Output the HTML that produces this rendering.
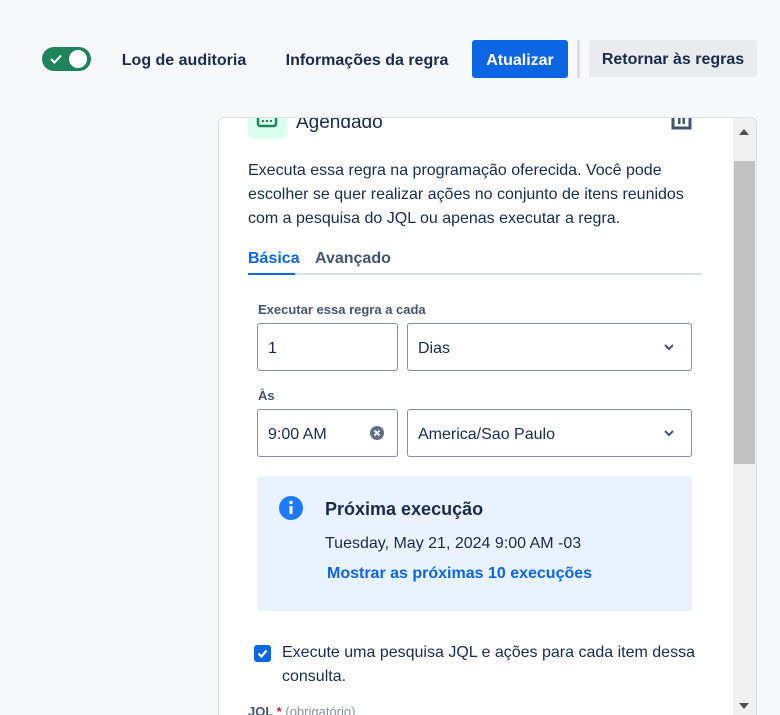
<!DOCTYPE html>
<html style="width:780px;height:715px;overflow:hidden"><head><meta charset="utf-8"><style>
*{box-sizing:border-box;margin:0;padding:0}
body{width:780px;height:715px;overflow:hidden;background:#f7f8f9;font-family:"Liberation Sans",sans-serif;color:#172b4d;position:relative}
.a{position:absolute}
.btn{position:absolute;height:38px;line-height:41px;font-size:16px;font-weight:bold;border-radius:3px;text-align:center;color:#172b4d}
.inp{position:absolute;border:1px solid #8590a2;border-radius:3px;background:#fff;font-size:16px;color:#172b4d;padding-left:10px;line-height:50px;height:48px}
.chev{position:absolute;right:16px;top:17px}
</style></head><body>
<div class="a" style="left:42px;top:47px;width:49px;height:24px;border-radius:12px;background:#1f845a"></div>
<svg class="a" style="left:49px;top:53px" width="14" height="12"><path d="M2 6l3.5 3.5L12 2.5" stroke="#fff" stroke-width="2" fill="none"/></svg>
<div class="a" style="left:69px;top:50px;width:18px;height:18px;border-radius:50%;background:#fff"></div>
<div class="btn" style="left:108px;top:40px;width:152px">Log de auditoria</div>
<div class="btn" style="left:274px;top:40px;width:186px">Informações da regra</div>
<div class="btn" style="left:472px;top:40px;width:96px;background:#0c66e4;color:#fff">Atualizar</div>
<div class="a" style="left:577px;top:40px;width:3px;height:38px;background:#dcdfe4"></div>
<div class="btn" style="left:589px;top:40px;width:168px;height:37px;line-height:40px;background:#e9ebee">Retornar às regras</div>

<div class="a" style="left:218px;top:117px;width:539px;height:620px;background:#fff;border:1px solid #dcdfe4;border-radius:6px;overflow:hidden">
  <div class="a" style="left:29px;top:-18px;width:39px;height:39px;border-radius:6px;background:#dcfff1"></div>
  <svg class="a" style="left:37px;top:-6px" width="24" height="18"><rect x="2" y="0" width="18" height="14" rx="2" fill="none" stroke="#1f845a" stroke-width="2.5"/><g fill="#1f845a"><rect x="6" y="4" width="2" height="2"/><rect x="10" y="4" width="2" height="2"/><rect x="14" y="4" width="2" height="2"/><rect x="6" y="8" width="2" height="2"/><rect x="10" y="8" width="2" height="2"/><rect x="14" y="8" width="2" height="2"/></g></svg>
  <div class="a" style="left:77px;top:-7px;font-size:19px;line-height:24px">Agendado</div>
  <svg class="a" style="left:452px;top:-4px" width="22" height="20"><path d="M2 0v14h17V0" fill="none" stroke="#44546f" stroke-width="3"/><rect x="7" y="0" width="2.5" height="10" fill="#44546f"/><rect x="11.5" y="0" width="2.5" height="10" fill="#44546f"/></svg>
  <div class="a" style="left:29px;top:41px;width:470px;font-size:16px;line-height:24px">Executa essa regra na programação oferecida. Você pode escolher se quer realizar ações no conjunto de itens reunidos com a pesquisa do JQL ou apenas executar a regra.</div>
  <div class="a" style="left:29px;top:132px;font-size:16px;font-weight:bold;color:#0c66e4">Básica</div>
  <div class="a" style="left:96px;top:132px;font-size:16px;font-weight:bold;color:#44546f">Avançado</div>
  <div class="a" style="left:29px;top:155px;width:454px;height:2px;background:#dcdfe4"></div>
  <div class="a" style="left:29px;top:155px;width:47px;height:2px;background:#0c66e4"></div>
  <div class="a" style="left:39px;top:184px;font-size:13px;font-weight:bold;color:#44546f">Executar essa regra a cada</div>
  <div class="inp" style="left:38px;top:205px;width:141px">1</div>
  <div class="inp" style="left:188px;top:205px;width:285px">Dias<svg class="chev" width="12" height="12"><path d="M2 4l4 4 4-4" stroke="#44546f" stroke-width="2" fill="none"/></svg></div>
  <div class="a" style="left:39px;top:270px;font-size:13px;font-weight:bold;color:#44546f">Às</div>
  <div class="inp" style="left:38px;top:291px;width:141px">9:00 AM<svg class="a" style="left:112px;top:16px" width="14" height="14"><circle cx="7" cy="7" r="7" fill="#626f86"/><path d="M4.5 4.5l5 5M9.5 4.5l-5 5" stroke="#fff" stroke-width="1.8"/></svg></div>
  <div class="inp" style="left:188px;top:291px;width:285px">America/Sao Paulo<svg class="chev" width="12" height="12"><path d="M2 4l4 4 4-4" stroke="#44546f" stroke-width="2" fill="none"/></svg></div>
  <div class="a" style="left:38px;top:358px;width:435px;height:135px;background:#e9f2ff;border-radius:3px"></div>
  <svg class="a" style="left:60px;top:378px" width="24" height="24"><circle cx="12" cy="12" r="12" fill="#1d7afc"/><rect x="10.5" y="10" width="3" height="8" fill="#fff"/><circle cx="12" cy="6.5" r="1.7" fill="#fff"/></svg>
  <div class="a" style="left:106px;top:381px;font-size:18px;font-weight:bold">Próxima execução</div>
  <div class="a" style="left:106px;top:417px;font-size:16px">Tuesday, May 21, 2024 9:00 AM -03</div>
  <div class="a" style="left:108px;top:447px;font-size:16px;font-weight:bold;color:#0c66e4">Mostrar as próximas 10 execuções</div>
  <div class="a" style="left:35px;top:527px;width:17px;height:17px;border-radius:3px;background:#0c66e4"></div>
  <svg class="a" style="left:37px;top:529px" width="13" height="13"><path d="M2.5 6.5l3 3 5-6" stroke="#fff" stroke-width="2.2" fill="none"/></svg>
  <div class="a" style="left:63px;top:523px;width:430px;font-size:16px;line-height:24px">Execute uma pesquisa JQL e ações para cada item dessa consulta.</div>
  <div class="a" style="left:29px;top:586px;font-size:13px;font-weight:bold;color:#44546f">JQL <span style="color:#ae2e24">*</span> <span style="font-weight:normal;color:#8590a2">(obrigatório)</span></div>
  <div class="a" style="left:514px;top:0;width:23px;height:600px;background:#f1f1f1"></div>
  <div class="a" style="left:515px;top:43px;width:21px;height:303px;background:#c1c1c1"></div>
  <svg class="a" style="left:519px;top:10px" width="12" height="8"><path d="M1 7L6 1l5 6z" fill="#505050"/></svg>
  <svg class="a" style="left:519px;top:584px" width="12" height="8"><path d="M1 1h10L6 7z" fill="#505050"/></svg>
</div>
</body></html>
